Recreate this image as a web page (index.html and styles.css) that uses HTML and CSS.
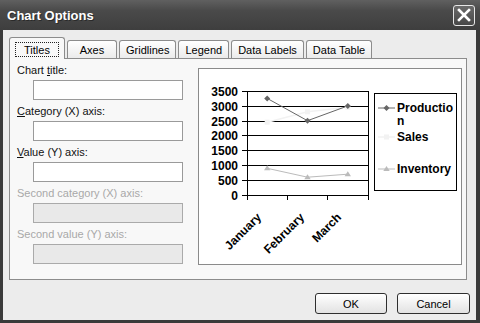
FILE: index.html
```html
<!DOCTYPE html>
<html lang="en">
<head>
    <meta charset="UTF-8">
    <meta name="viewport" content="width=device-width, initial-scale=1.0">
    <title>Chart Options</title>
    <link rel="stylesheet" href="styles.css">
</head>
<body>
    <div class="dialog">
        <div class="titlebar">
            <span class="title">Chart Options</span>
            <div class="close">
                <svg width="14" height="14" viewBox="0 0 14 14">
                    <path d="M2 2 L12 12 M12 2 L2 12" stroke="#fff" stroke-width="2.6" stroke-linecap="square"/>
                </svg>
            </div>
        </div>

        <div class="body">
            <div class="tabs">
                <div class="tab active"><span class="focus">Titles</span></div>
                <div class="tab">Axes</div>
                <div class="tab">Gridlines</div>
                <div class="tab">Legend</div>
                <div class="tab">Data Labels</div>
                <div class="tab">Data Table</div>
            </div>

            <div class="panel">
                <div class="fields">
                    <div class="field">
                        <label>Chart <u>t</u>itle:</label>
                        <input type="text">
                    </div>
                    <div class="field">
                        <label><u>C</u>ategory (X) axis:</label>
                        <input type="text">
                    </div>
                    <div class="field">
                        <label><u>V</u>alue (Y) axis:</label>
                        <input type="text">
                    </div>
                    <div class="field disabled">
                        <label>Second category (X) axis:</label>
                        <input type="text" disabled>
                    </div>
                    <div class="field disabled">
                        <label>Second value (Y) axis:</label>
                        <input type="text" disabled>
                    </div>
                </div>

                <div class="chart-frame">
                    <svg class="chart" width="262" height="195" viewBox="0 0 262 195">
                        <!-- gridlines -->
                        <g class="grid">
                            <line x1="43" y1="22.5" x2="169" y2="22.5"/>
                            <line x1="43" y1="37.5" x2="169" y2="37.5"/>
                            <line x1="43" y1="52.5" x2="169" y2="52.5"/>
                            <line x1="43" y1="66.5" x2="169" y2="66.5"/>
                            <line x1="43" y1="81.5" x2="169" y2="81.5"/>
                            <line x1="43" y1="96.5" x2="169" y2="96.5"/>
                            <line x1="43" y1="111.5" x2="169" y2="111.5"/>
                            <line x1="43" y1="126.5" x2="169.5" y2="126.5"/>
                            <line x1="48.5" y1="22" x2="48.5" y2="131"/>
                            <line x1="169.5" y1="22" x2="169.5" y2="131"/>
                            <line x1="88.5" y1="126" x2="88.5" y2="131"/>
                            <line x1="128.5" y1="126" x2="128.5" y2="131"/>
                        </g>

                        <g class="ylabels">
                            <text x="39" y="27">3500</text>
                            <text x="39" y="42">3000</text>
                            <text x="39" y="57">2500</text>
                            <text x="39" y="71">2000</text>
                            <text x="39" y="86">1500</text>
                            <text x="39" y="101">1000</text>
                            <text x="39" y="116">500</text>
                            <text x="39" y="131">0</text>
                        </g>

                        <!-- series -->
                        <polyline class="sales" points="68.2,53.2 108.5,42.8 148.8,38.3"/>
                        <polyline class="production" points="68.2,29.4 108.5,51.7 148.8,36.9"/>
                        <polyline class="inventory" points="68.2,99.3 108.5,108.2 148.8,105.2"/>

                        <g class="mark-sales">
                            <rect x="65.7" y="50.7" width="5" height="5"/>
                            <rect x="106" y="40.3" width="5" height="5"/>
                            <rect x="146.3" y="35.8" width="5" height="5"/>
                        </g>
                        <g class="mark-production">
                            <polygon points="68.2,26.4 71.2,29.4 68.2,32.4 65.2,29.4"/>
                            <polygon points="108.5,48.7 111.5,51.7 108.5,54.7 105.5,51.7"/>
                            <polygon points="148.8,33.9 151.8,36.9 148.8,39.9 145.8,36.9"/>
                        </g>
                        <g class="mark-inventory">
                            <polygon points="68.2,96.3 71.4,101.3 65,101.3"/>
                            <polygon points="108.5,105.2 111.7,110.2 105.3,110.2"/>
                            <polygon points="148.8,102.2 152,107.2 145.6,107.2"/>
                        </g>

                        <g class="xlabels">
                            <text transform="translate(63 149) rotate(-45)">January</text>
                            <text transform="translate(106 149) rotate(-45)">February</text>
                            <text transform="translate(143 149) rotate(-45)">March</text>
                        </g>

                        <!-- legend -->
                        <rect class="legend" x="175.5" y="24.5" width="82" height="97"/>
                        <line class="production" x1="179" y1="39" x2="196" y2="39"/>
                        <polygon class="mark-production" points="187.5,36 190.5,39 187.5,42 184.5,39"/>
                        <line class="sales" x1="179" y1="68" x2="196" y2="68"/>
                        <rect class="mark-sales" x="185" y="65.5" width="5" height="5"/>
                        <line class="inventory" x1="179" y1="100" x2="196" y2="100"/>
                        <polygon class="mark-inventory" points="187.5,97 190.7,102 184.3,102"/>
                        <g class="legend-text">
                            <text x="198" y="43">Productio</text>
                            <text x="198" y="56">n</text>
                            <text x="198" y="72">Sales</text>
                            <text x="198" y="104">Inventory</text>
                        </g>
                    </svg>
                </div>
            </div>

            <div class="buttons">
                <button class="btn">OK</button>
                <button class="btn">Cancel</button>
            </div>
        </div>
    </div>
</body>
</html>
```

FILE: styles.css
```css
body {
    margin: 0;
    font-family: "Liberation Sans", Arial, sans-serif;
    font-size: 11px;
    background: #fff;
}

.dialog {
    width: 480px;
    height: 323px;
    display: flex;
    flex-direction: column;
    background: #3a3a3a;
}

.titlebar {
    height: 30px;
    flex: none;
    display: flex;
    align-items: center;
    justify-content: space-between;
    padding: 0 5px 0 7px;
    background: linear-gradient(#606060, #4a4a4a 35%, #3e3e3e);
    color: #fff;
}

.title {
    font-size: 13px;
    font-weight: bold;
    text-shadow: 1px 1px 0 #2a2a2a;
}

.close {
    width: 22px;
    height: 21px;
    box-sizing: border-box;
    border: 1px solid #e6e6e6;
    border-radius: 3px;
    background: linear-gradient(#6a6a6a, #474747);
    display: flex;
    align-items: center;
    justify-content: center;
}

.body {
    flex: 1;
    margin: 0 4px 3px 3px;
    padding: 7px 6px 0 6px;
    background: #ececec;
    display: flex;
    flex-direction: column;
}

.tabs {
    display: flex;
    align-items: flex-end;
    gap: 2px;
    height: 21px;
}

.tab {
    height: 18px;
    min-width: 50px;
    padding: 0 6px;
    box-sizing: border-box;
    border: 1px solid #8c8c8c;
    border-bottom: none;
    border-radius: 3px 3px 0 0;
    background: linear-gradient(#ffffff, #ebebeb);
    display: flex;
    align-items: center;
    justify-content: center;
    white-space: nowrap;
}

.tab.active {
    height: 22px;
    min-width: 56px;
    margin-bottom: -1px;
    padding: 4px 5px 2px;
    background: #f8f8f8;
    position: relative;
    z-index: 1;
}

.focus {
    flex: 1;
    align-self: stretch;
    display: flex;
    align-items: center;
    justify-content: center;
    border: 1px dotted #222;
}

.panel {
    height: 222px;
    flex: none;
    box-sizing: border-box;
    margin-right: 3px;
    border: 1px solid #8c8c8c;
    background: #f8f8f8;
    display: flex;
}

.fields {
    width: 188px;
    box-sizing: border-box;
    padding: 5px 0 0 7px;
    display: flex;
    flex-direction: column;
    gap: 5px;
}

.field label {
    display: block;
    height: 13px;
    line-height: 13px;
    color: #111;
}

.field input {
    display: block;
    width: 150px;
    height: 20px;
    box-sizing: border-box;
    margin: 3px 0 0 16px;
    border: 1px solid #9a9a9a;
    background: #fff;
}

.field.disabled label {
    color: #a8a8a8;
}

.field.disabled input {
    border-color: #aaa;
    background: #e9e9e9;
}

.chart-frame {
    width: 264px;
    height: 197px;
    box-sizing: border-box;
    margin-top: 9px;
    border: 1px solid #8a8a8a;
    background: #fff;
}

.chart {
    display: block;
    font-family: "Liberation Sans", Arial, sans-serif;
    font-weight: bold;
    font-size: 12px;
}

.grid line {
    stroke: #000;
    stroke-width: 1;
    shape-rendering: crispEdges;
}

.ylabels text {
    text-anchor: end;
}

.xlabels text {
    text-anchor: end;
}

.production {
    fill: none;
    stroke: #666;
    stroke-width: 1;
}

.sales {
    fill: none;
    stroke: #f2f2f2;
    stroke-width: 1.5;
}

.inventory {
    fill: none;
    stroke: #bbb;
    stroke-width: 1;
}

.mark-production {
    fill: #666;
}

.mark-sales {
    fill: #f2f2f2;
}

.mark-inventory {
    fill: #bbb;
}

.legend {
    fill: #fff;
    stroke: #000;
    stroke-width: 1;
}

.buttons {
    display: flex;
    justify-content: flex-end;
    gap: 10px;
    margin-top: 13px;
}

.btn {
    width: 72px;
    height: 21px;
    border: 1px solid #2e2e2e;
    border-radius: 3px;
    background: linear-gradient(#ffffff, #e2e2e2);
    font-family: "Liberation Sans", Arial, sans-serif;
    font-size: 11px;
    color: #000;
}

.btn + .btn {
    width: 73px;
}
```
